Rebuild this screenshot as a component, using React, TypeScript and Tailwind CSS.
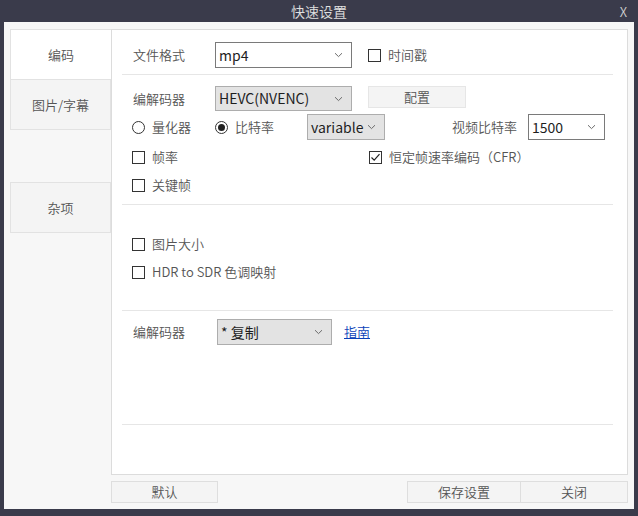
import React from 'react';

const font = { fontFamily: '"Noto Sans CJK SC", "Noto Sans", sans-serif' };

function Chevron() {
  return (
    <svg width="9" height="6" viewBox="0 0 9 6" className="shrink-0">
      <path d="M1 1.2 L4.5 4.6 L8 1.2" fill="none" stroke="#6b6b6b" strokeWidth="1" />
    </svg>
  );
}

function Select({ value, width, grey }: { value: string; width: string; grey?: boolean }) {
  return (
    <div
      className={`${width} flex items-center justify-between pl-[3px] pr-[8px] border ${
        grey ? 'bg-[#e3e3e3] border-[#adadad]' : 'bg-white border-[#7a7a7a]'
      } text-[14px] text-[#1e1e1e] font-normal`}
    >
      <span>{value}</span>
      <Chevron />
    </div>
  );
}

function Check({ label, checked }: { label: string; checked?: boolean }) {
  return (
    <div className="flex items-center gap-[7px]">
      <span className="w-[13px] h-[13px] border border-[#333] bg-white flex items-center justify-center">
        {checked && (
          <svg width="11" height="11" viewBox="0 0 11 11">
            <path d="M1.5 5.5 L4.2 8.2 L9.5 2.2" fill="none" stroke="#222" strokeWidth="1.2" />
          </svg>
        )}
      </span>
      <span className="text-[13px] text-[#555]">{label}</span>
    </div>
  );
}

function Radio({ label, checked }: { label: string; checked?: boolean }) {
  return (
    <div className="flex items-center gap-[7px]">
      <span className="w-[13px] h-[13px] rounded-full border border-[#333] bg-white flex items-center justify-center">
        {checked && <span className="w-[7px] h-[7px] rounded-full bg-[#222]" />}
      </span>
      <span className="text-[13px] text-[#555]">{label}</span>
    </div>
  );
}

const Divider = ({ className }: { className: string }) => (
  <div className={`${className} ml-[10px] mr-[14px] h-px bg-[#e6e6e6]`} />
);

export default function App() {
  return (
    <div className="w-[638px] h-[516px] bg-[#3a3b4b] flex flex-col select-none font-[350]" style={font}>
      {/* title bar */}
      <div className="h-[22px] flex items-center relative shrink-0">
        <span className="flex-1 text-center text-[14px] text-[#e0e0e0]">快速设置</span>
        <span className="absolute right-[11px] top-[2px] text-[13px] text-[#d0d0d0]">X</span>
      </div>

      <div className="flex-1 mx-[4px] mb-[7px] bg-[#f7f7f7] px-[6px] pt-[7px] flex flex-col">
        <div className="flex h-[446px]">
          {/* tabs */}
          <div className="w-[101px] flex flex-col">
            <div className="h-[51px] bg-white border border-r-0 border-[#e2e2e2] flex items-center justify-center text-[13px] text-[#555]">
              编码
            </div>
            <div className="h-[50px] bg-[#f4f4f4] border border-t-0 border-[#e2e2e2] flex items-center justify-center text-[13px] text-[#555]">
              图片/字幕
            </div>
            <div className="h-[51px] mt-[52px] bg-[#f4f4f4] border border-[#e2e2e2] flex items-center justify-center text-[13px] text-[#555]">
              杂项
            </div>
          </div>

          {/* content panel */}
          <div className="flex-1 bg-white border border-[#dcdcdc] flex flex-col">
            <div className="mt-[12px] h-[26px] flex items-stretch pl-[21px]">
              <span className="w-[82px] self-center text-[13px] text-[#555]">文件格式</span>
              <Select value="mp4" width="w-[137px]" />
              <div className="ml-[16px] self-center">
                <Check label="时间戳" />
              </div>
            </div>

            <Divider className="mt-[6px]" />

            <div className="mt-[11px] h-[25px] flex items-stretch pl-[21px]">
              <span className="w-[82px] self-center text-[13px] text-[#555]">编解码器</span>
              <Select value="HEVC(NVENC)" width="w-[137px]" grey />
              <div className="ml-[16px] w-[98px] h-[22px] bg-[#f4f4f4] border border-[#e6e6e6] flex items-center justify-center text-[13px] text-[#555]">
                配置
              </div>
            </div>

            <div className="mt-[3px] h-[26px] flex items-stretch pl-[20px] pr-[22px]">
              <div className="w-[83px] self-center">
                <Radio label="量化器" />
              </div>
              <div className="w-[92px] self-center">
                <Radio label="比特率" checked />
              </div>
              <Select value="variable" width="w-[78px]" grey />
              <span className="ml-auto mr-[11px] self-center text-[13px] text-[#555]">视频比特率</span>
              <Select value="1500" width="w-[77px]" />
            </div>

            <div className="mt-[7px] h-[20px] flex items-center pl-[20px]">
              <div className="w-[237px]">
                <Check label="帧率" />
              </div>
              <Check label="恒定帧速率编码（CFR）" checked />
            </div>

            <div className="mt-[8px] h-[20px] flex items-center pl-[20px]">
              <Check label="关键帧" />
            </div>

            <Divider className="mt-[9px]" />

            <div className="mt-[29px] h-[20px] flex items-center pl-[20px]">
              <Check label="图片大小" />
            </div>
            <div className="mt-[8px] h-[20px] flex items-center pl-[20px]">
              <Check label="HDR to SDR 色调映射" />
            </div>

            <Divider className="mt-[28px]" />

            <div className="mt-[8px] h-[26px] flex items-stretch pl-[21px]">
              <span className="w-[84px] self-center text-[13px] text-[#555]">编解码器</span>
              <Select value="* 复制" width="w-[115px]" grey />
              <a className="ml-[12px] self-center text-[13px] text-[#0b3fb8] underline">指南</a>
            </div>

            <Divider className="mt-[79px]" />
          </div>
        </div>

        {/* bottom buttons */}
        <div className="mt-[6px] h-[22px] flex">
          <div className="ml-[101px] w-[107px] bg-[#f4f4f4] border border-[#dedede] flex items-center justify-center text-[13px] text-[#555]">
            默认
          </div>
          <div className="ml-auto w-[114px] bg-[#f4f4f4] border border-[#dedede] flex items-center justify-center text-[13px] text-[#555]">
            保存设置
          </div>
          <div className="w-[107px] bg-[#f4f4f4] border border-l-0 border-[#dedede] flex items-center justify-center text-[13px] text-[#555]">
            关闭
          </div>
        </div>
      </div>
    </div>
  );
}
